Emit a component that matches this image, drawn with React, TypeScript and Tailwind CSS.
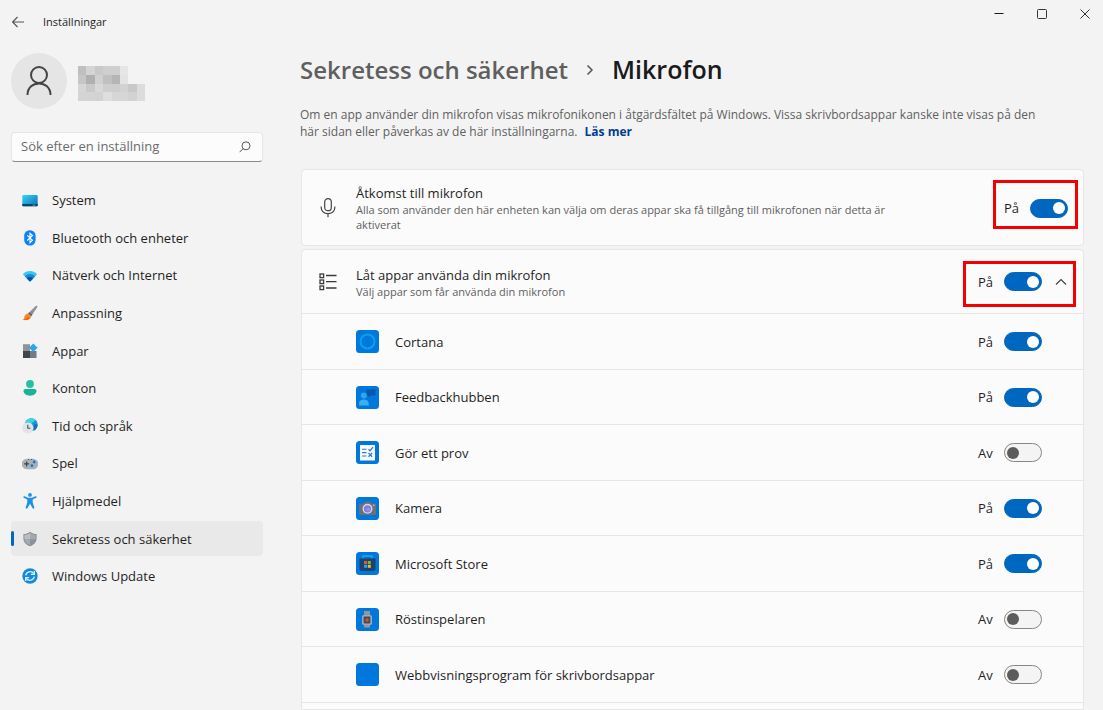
import { useId, useState, type ReactNode } from "react";

const mosaic: string[][] = [
  ["#bfbfbf", "#d4d4d4", "#c9c9c9", "#cfcfcf", "#cfcfcf", "#e6e6e6"],
  ["#c6c6c6", "#b0b0b0", "#d0d0d0", "#c0c0c0", "#b5b5b5", "#e3e3e3"],
  ["#d6d6d6", "#c9c9c9", "#d8d8d8", "#cecece", "#cecece", "#d2d2d2", "#c8c8c8", "#dcdcdc"],
  ["#d4d4d4", "#d4d4d4", "#d2d2d2", "#dedede", "#d6d6d6", "#d6d6d6", "#d2d2d2", "#dcdcdc"],
];

function HiddenName() {
  return (
    <svg width="67" height="35" viewBox="0 0 8 4" preserveAspectRatio="none" shapeRendering="crispEdges" role="img" aria-label="Användare">
      {mosaic.map((row, y) =>
        row.map((c, x) => <rect key={`${x}-${y}`} x={x} y={y} width="1" height="1" fill={c} />)
      )}
    </svg>
  );
}

function NavSvg({ children }: { children: ReactNode }) {
  return (
    <svg width="16" height="16" viewBox="0 0 16 16" className="shrink-0" aria-hidden="true">
      {children}
    </svg>
  );
}

const navItems: { label: string; icon: ReactNode }[] = [
  {
    label: "System",
    icon: (
      <NavSvg>
        <defs>
          <linearGradient id="sys" x1="0" y1="0" x2="1" y2="1">
            <stop offset="0" stopColor="#35d5ee" />
            <stop offset="1" stopColor="#0a6dbb" />
          </linearGradient>
        </defs>
        <rect x="0.3" y="2" width="15.4" height="11.3" rx="1" fill="url(#sys)" />
        <path d="M0.3 11h15.4v1.3a1 1 0 0 1-1 1H1.3a1 1 0 0 1-1-1z" fill="#0c4068" />
        <path d="M10.5 12.2h3" stroke="#8fc3e0" strokeWidth="0.7" />
      </NavSvg>
    ),
  },
  {
    label: "Bluetooth och enheter",
    icon: (
      <NavSvg>
        <rect x="2.2" y="0.2" width="11.4" height="15.4" rx="5.5" fill="#0a82fb" />
        <path d="M5.2 5.3l5.3 4.9L8 12.6V3.2l2.5 2.3-5.3 5" fill="none" stroke="#fff" strokeWidth="1.1" />
      </NavSvg>
    ),
  },
  {
    label: "Nätverk och Internet",
    icon: (
      <NavSvg>
        <path d="M.8 6.2C4.600 1.800 11.400 1.800 15.200 6.200L8.700 13.100a1 1 0 0 1-1.400 0z" fill="#3cc8f2" />
        <path d="M2.900 8.400c2.800-3.200 7.400-3.200 10.200 0l-4.400 4.700a1 1 0 0 1-1.400 0z" fill="#168bdc" />
        <path d="M4.900 10.500c1.700-1.900 4.500-1.900 6.200 0l-2.400 2.600a1 1 0 0 1-1.400 0z" fill="#0b4fa0" />
      </NavSvg>
    ),
  },
  {
    label: "Anpassning",
    icon: (
      <NavSvg>
        <path d="M14 .8c.8-.5 1.900.4 1.400 1.300L9.200 11.300 6 8.500z" fill="#8b9299" />
        <path d="M7.400 7.200l3.100 2.500-1.300 1.600L6 8.500z" fill="#62686e" />
        <path d="M6 8.400l3.100 2.800c.1 2.800-3.300 4.800-8.500 3.600 1.900-.8 1.300-2.100 2-3.900.6-1.500 1.800-2.400 3.400-2.500z" fill="#f68b1f" />
        <path d="M.6 14.800c2.500.2 4.500-1 5-3l2 1.500c-1.600 1.800-4.200 2.100-7 1.500z" fill="#e25f12" />
      </NavSvg>
    ),
  },
  {
    label: "Appar",
    icon: (
      <NavSvg>
        <rect x="1" y="1.200" width="7" height="7" fill="#8d949b" />
        <rect x="1" y="8" width="7" height="7" fill="#41464b" />
        <rect x="8" y="8" width="6.500" height="7" fill="#747b82" />
        <path d="M11.300 .500L15.600 4.800 11.300 9.100 7 4.800z" fill="#29a6ee" />
      </NavSvg>
    ),
  },
  {
    label: "Konton",
    icon: (
      <NavSvg>
        <circle cx="8" cy="4" r="3.900" fill="#27bfa5" />
        <path d="M3.500 9h9c1.200 0 2 .8 2 1.800 0 3-2.800 4.900-6.500 4.900S1.500 13.800 1.500 10.800C1.500 9.800 2.300 9 3.500 9z" fill="#18b496" />
      </NavSvg>
    ),
  },
  {
    label: "Tid och språk",
    icon: (
      <NavSvg>
        <circle cx="9.300" cy="6.600" r="6.400" fill="#1c96d4" />
        <path d="M4 3.500C6 .2 11-.8 13.300 2c-.7 2-2.600 1.500-3.700 3.500S6 7.500 3.200 6z" fill="#3bd6dc" />
        <path d="M12 7c1.500-1.500 3-1 3.600 0-.2 2.500-1.600 4.500-3.600 5.400z" fill="#1272c2" />
        <circle cx="5.800" cy="10" r="5.600" fill="#e1e3e6" />
        <path d="M5.800 6.800V10.300h2.600" fill="none" stroke="#4c5259" strokeWidth="1.100" />
      </NavSvg>
    ),
  },
  {
    label: "Spel",
    icon: (
      <NavSvg>
        <path d="M5 2.700h6a4.900 4.900 0 0 1 0 10.600H5A4.900 4.900 0 0 1 5 2.700z" fill="#a8b0b8" />
        <path d="M4.600 5.400v5M2.100 7.900h5" stroke="#3e444a" strokeWidth="1.200" />
        <circle cx="12.200" cy="6" r="1.400" fill="#1a78c8" />
        <circle cx="9.900" cy="9.700" r="1.400" fill="#1a78c8" />
        <path d="M6 3.500h1.200M9 3.500h1.200" stroke="#4c535a" strokeWidth="0.900" />
      </NavSvg>
    ),
  },
  {
    label: "Hjälpmedel",
    icon: (
      <NavSvg>
        <circle cx="8" cy="1.900" r="1.900" fill="#1c92e4" />
        <path d="M2.500 3.200L6 4.700h4l3.500-1.500c1-.4 1.700 1 .7 1.500L10.700 6.600v3L12.300 14.500c.3 1.200-1.300 1.700-1.800.6L8 10.800l-2.500 4.300c-.5 1.100-2.100.6-1.800-.6L5.300 9.600v-3L1.800 4.700c-1-.5-.3-1.900.7-1.500z" fill="#1c92e4" />
      </NavSvg>
    ),
  },
  {
    label: "Sekretess och säkerhet",
    icon: (
      <NavSvg>
        <path d="M8 .8c2 1.600 4.200 2.300 6.600 2.300v4.300c0 3.600-2.400 6.100-6.600 7.900-4.200-1.800-6.600-4.300-6.600-7.900V3.100C3.800 3.100 6 2.400 8 .8z" fill="#8b9198" />
        <path d="M8 2v6.200H2.400V4C4.500 3.900 6.400 3.200 8 2z" fill="#b9bec3" />
        <path d="M8 2v6.200h5.600V4C11.500 3.900 9.600 3.200 8 2z" fill="#a4aab0" />
        <path d="M8 8.200H2.500C2.800 11 4.700 12.800 8 14.200z" fill="#a4aab0" />
      </NavSvg>
    ),
  },
  {
    label: "Windows Update",
    icon: (
      <NavSvg>
        <circle cx="8" cy="8" r="7.700" fill="#128bdc" />
        <path d="M3.700 7.300A4.500 4.500 0 0 1 11.700 5.500M12.300 8.700A4.500 4.500 0 0 1 4.300 10.500" fill="none" stroke="#d9f1ff" strokeWidth="1.300" />
        <path d="M12.300 3v3.400H8.900M3.700 13V9.600h3.400" fill="none" stroke="#d9f1ff" strokeWidth="1.300" />
      </NavSvg>
    ),
  },
];

function AppSvg({ children }: { children?: ReactNode }) {
  return (
    <svg width="23" height="23" viewBox="0 0 23 23" className="shrink-0" aria-hidden="true">
      <rect width="23" height="23" rx="3.500" fill="#0077dc" />
      {children}
    </svg>
  );
}

const apps: { name: string; on: boolean; icon: ReactNode }[] = [
  {
    name: "Cortana",
    on: true,
    icon: (
      <AppSvg>
        <circle cx="11.500" cy="11.500" r="7" fill="none" stroke="#06a2ee" strokeWidth="2" />
      </AppSvg>
    ),
  },
  {
    name: "Feedbackhubben",
    on: true,
    icon: (
      <AppSvg>
        <path d="M10.500 3.500h9v6h-4.500l-2.500 2v-2h-2z" fill="#0857a8" />
        <circle cx="7.800" cy="9.500" r="3" fill="#2fa6e8" />
        <path d="M3 19.500v-2c0-5.300 9.700-5.300 9.700 0v2z" fill="#36b3ee" />
      </AppSvg>
    ),
  },
  {
    name: "Gör ett prov",
    on: false,
    icon: (
      <AppSvg>
        <rect x="4" y="4" width="15" height="15.500" fill="#f8fbfe" />
        <path d="M6 8.300h4.500M6 11.600h4.500M6 15h4.500" stroke="#2c7fd0" strokeWidth="1.100" />
        <path d="M12.500 8.200l1.500 1.500 3-3.500M12.500 12l3.700 3.700M16.200 12l-3.700 3.700" fill="none" stroke="#2c7fd0" strokeWidth="1.300" />
      </AppSvg>
    ),
  },
  {
    name: "Kamera",
    on: true,
    icon: (
      <AppSvg>
        <path d="M4 6.500h3.500l1.300-2h5.400l1.300 2H19a1 1 0 0 1 1 1V17a1 1 0 0 1-1 1H4a1 1 0 0 1-1-1V7.500a1 1 0 0 1 1-1z" fill="#6c7177" />
        <circle cx="11.500" cy="11.800" r="5" fill="#d6d8de" />
        <circle cx="11.500" cy="11.800" r="3.600" fill="#7a7de0" />
        <circle cx="12.300" cy="12.600" r="2" fill="#a887e6" />
        <circle cx="17.800" cy="8.300" r="0.700" fill="#d8dadd" />
      </AppSvg>
    ),
  },
  {
    name: "Microsoft Store",
    on: true,
    icon: (
      <AppSvg>
        <path d="M7 6.500V4h9v2.500" fill="none" stroke="#1fa9ee" strokeWidth="1.300" />
        <path d="M3.500 6.500h16V17a2 2 0 0 1-2 2h-12a2 2 0 0 1-2-2z" fill="#1e426e" />
        <rect x="8" y="9" width="3" height="3" fill="#f0532d" />
        <rect x="11.800" y="9" width="3" height="3" fill="#7eba1c" />
        <rect x="8" y="12.800" width="3" height="3" fill="#1ba8ee" />
        <rect x="11.800" y="12.800" width="3" height="3" fill="#fdb913" />
      </AppSvg>
    ),
  },
  {
    name: "Röstinspelaren",
    on: false,
    icon: (
      <AppSvg>
        <path d="M8 3h6v5H8zM8 16h6v3.500H8z" fill="#8f979f" />
        <rect x="6" y="7" width="10" height="10" rx="1.800" fill="#a3a9af" />
        <rect x="7.600" y="8.600" width="6.800" height="6.800" rx="0.800" fill="#454d56" />
        <circle cx="11" cy="12" r="1.800" fill="#c4583c" />
      </AppSvg>
    ),
  },
  { name: "Webbvisningsprogram för skrivbordsappar", on: false, icon: <AppSvg /> },
];

function Toggle({ name, initial }: { name: string; initial: boolean }) {
  const id = useId();
  const [on, setOn] = useState(initial);
  return (
    <div className="flex items-center">
      <label htmlFor={id} className="w-[26px] text-[13px] leading-5">
        {on ? "På" : "Av"}
      </label>
      <input
        id={id}
        type="checkbox"
        role="switch"
        aria-label={name}
        checked={on}
        onChange={() => setOn(!on)}
        className="flex h-[19px] w-[38px] shrink-0 appearance-none items-center rounded-full border border-[#868686] bg-[#f4f4f4] px-[2px] before:size-3 before:rounded-full before:bg-[#5c5c5c] checked:justify-end checked:border-[#0067c0] checked:bg-[#0067c0] checked:before:bg-white"
      />
    </div>
  );
}

export default function App() {
  const [expanded, setExpanded] = useState(true);
  return (
    <div className="flex min-h-screen flex-col bg-[#f3f3f3] font-['Open_Sans','Noto_Sans',sans-serif] text-[13px] text-[#1f1f1f]">
      <header className="flex h-11 items-start justify-between pl-3">
        <div className="flex h-11 items-center gap-[19px]">
          <button aria-label="Tillbaka">
            <svg width="12" height="12" viewBox="0 0 12 12" fill="none" stroke="#555" strokeWidth="1.100">
              <path d="M12 6H.8M5.500 1L.6 6l4.900 5" />
            </svg>
          </button>
          <span className="text-[11px]">Inställningar</span>
        </div>
        <div className="flex h-7 items-center gap-[31px] pr-3">
          <button aria-label="Minimera">
            <svg width="12" height="12" viewBox="0 0 12 12" stroke="#1a1a1a">
              <path d="M1.500 5.500h9" />
            </svg>
          </button>
          <button aria-label="Maximera">
            <svg width="12" height="12" viewBox="0 0 12 12" fill="none" stroke="#333">
              <rect x="1.500" y="1.500" width="9" height="9" rx="1" />
            </svg>
          </button>
          <button aria-label="Stäng">
            <svg width="12" height="12" viewBox="0 0 12 12" stroke="#333">
              <path d="M1.500 1.500l9 9M10.500 1.500l-9 9" />
            </svg>
          </button>
        </div>
      </header>

      <div className="flex flex-1 gap-[37px] pr-[19px] pl-[11px]">
        <aside className="w-[252px] shrink-0 pt-[9px]">
          <div className="flex items-center gap-[11px]">
            <div className="flex size-14 items-center justify-center rounded-full bg-[#e5e5e5]">
              <svg width="28" height="30" viewBox="0 0 28 30" fill="none" stroke="#444" strokeWidth="2" aria-hidden="true">
                <circle cx="14" cy="9" r="8" />
                <path d="M2.500 29c0-15.500 23-15.500 23 0" />
              </svg>
            </div>
            <div className="pt-1">
              <HiddenName />
            </div>
          </div>

          <div className="mt-[23px] flex h-[30px] items-center rounded border border-b-[#8a8a8a] border-[#e6e6e6] bg-[#fcfcfc] pr-[11px] pl-[9px]">
            <input
              type="search"
              aria-label="Sök efter en inställning"
              placeholder="Sök efter en inställning"
              className="min-w-0 flex-1 bg-transparent outline-none placeholder:text-[#6b6b6b]"
            />
            <svg width="12" height="12" viewBox="0 0 12 12" fill="none" stroke="#555" aria-hidden="true">
              <circle cx="7" cy="4.800" r="4" />
              <path d="M4 7.700L.6 11.200" />
            </svg>
          </div>

          <nav className="mt-[21px] flex h-[411px] flex-col justify-between">
            {navItems.map(({ label, icon }) => {
              const active = label === "Sekretess och säkerhet";
              return (
                <a
                  key={label}
                  href="#"
                  aria-current={active ? "page" : undefined}
                  className="group flex h-[35px] items-center rounded aria-[current=page]:bg-[#e9e9e9]"
                >
                  <span className="mr-2 h-[15px] w-[3px] rounded-full group-aria-[current=page]:bg-[#0067c0]" />
                  {icon}
                  <span className="ml-[14px] pt-px">{label}</span>
                </a>
              );
            })}
          </nav>
        </aside>

        <main className="flex min-w-0 flex-1 flex-col">
          <h1 className="flex h-[50px] items-center gap-[18px] pt-px font-semibold">
            <a href="#" className="text-[24px] text-[#5f5f5f]">
              Sekretess och säkerhet
            </a>
            <svg width="8" height="12" viewBox="0 0 8 12" fill="none" stroke="#555" strokeWidth="1.500" aria-hidden="true">
              <path d="M1.500 1.500L6 6l-4.500 4.500" />
            </svg>
            <span className="text-[25px] text-[#1a1a1a]">Mikrofon</span>
          </h1>
          <p className="mt-3 max-w-[750px] text-[12px] leading-[17px] text-[#5f5f5f]">
            Om en app använder din mikrofon visas mikrofonikonen i åtgärdsfältet på Windows. Vissa skrivbordsappar kanske inte visas på den här sidan eller påverkas av de här inställningarna.{" "}
            <a href="#" className="ml-1 font-bold text-[#003e92]">
              Läs mer
            </a>
          </p>

          <section className="mt-[29px] ml-px flex h-[77px] items-center rounded border border-[#e6e6e6] bg-[#fbfbfb] pr-[5px] pl-[18px]">
            <svg width="16" height="20" viewBox="0 0 16 20" fill="none" stroke="#444" strokeWidth="1.200" className="shrink-0" aria-hidden="true">
              <rect x="4.700" y="0.700" width="6.600" height="12" rx="3.300" />
              <path d="M1.200 8.500v1.200c0 3.600 3 6 6.800 6s6.800-2.400 6.800-6V8.500M8 15.700v3.600" />
            </svg>
            <div className="ml-5 min-w-0 flex-1 pt-px">
              <h2 className="leading-[17px]">Åtkomst till mikrofon</h2>
              <p className="max-w-[540px] text-[11px] leading-[15px] text-[#5f5f5f]">
                Alla som använder den här enheten kan välja om deras appar ska få tillgång till mikrofonen när detta är aktiverat
              </p>
            </div>
            <div className="mb-[7px] flex h-[49px] items-center border-[3px] border-[#f50000] pt-2 pr-[7px] pl-2">
              <Toggle name="Åtkomst till mikrofon" initial={true} />
            </div>
          </section>

          <section className="mt-[3px] ml-px flex-1 rounded-t border border-[#e6e6e6] bg-[#fbfbfb]">
            <div className="flex h-[63px] items-center pr-[7px] pl-[17px]">
              <svg width="18" height="18" viewBox="0 0 18 18" fill="none" stroke="#3a3a3a" strokeWidth="1.300" className="shrink-0" aria-hidden="true">
                <rect x="1" y="1" width="3.600" height="3.600" />
                <rect x="1" y="7" width="3.600" height="3.600" />
                <rect x="1" y="13" width="3.600" height="3.600" />
                <path d="M7 2.500h10.500M7 8.700h10.500M7 15h10.500" />
              </svg>
              <div className="ml-[19px] min-w-0 flex-1 pt-0.5">
                <h2 className="leading-[17px]">Låt appar använda din mikrofon</h2>
                <p className="text-[11px] leading-[15px] text-[#5f5f5f]">Välj appar som får använda din mikrofon</p>
              </div>
              <div className="mt-[5px] flex h-[46px] items-center gap-[13px] border-[3px] border-[#f50000] pr-[6px] pb-[5px] pl-3">
                <Toggle name="Låt appar använda din mikrofon" initial={true} />
                <button aria-label="Visa appar" aria-expanded={expanded} onClick={() => setExpanded(!expanded)}>
                  <svg width="12" height="8" viewBox="0 0 12 8" fill="none" stroke="#444" strokeWidth="1.200">
                    <path d="M1 6.500l5-5 5 5" />
                  </svg>
                </button>
              </div>
            </div>
            {expanded && (
              <ul className="border-b border-[#e6e6e6]">
                {apps.map(({ name, on, icon }) => (
                  <li key={name} className="flex items-center border-t border-[#e6e6e6] pr-[41px] pl-[54px] odd:h-14 even:h-[55px]">
                    {icon}
                    <span className="ml-4 flex-1 pt-0.5">{name}</span>
                    <Toggle name={name} initial={on} />
                  </li>
                ))}
              </ul>
            )}
          </section>
        </main>
      </div>
    </div>
  );
}
